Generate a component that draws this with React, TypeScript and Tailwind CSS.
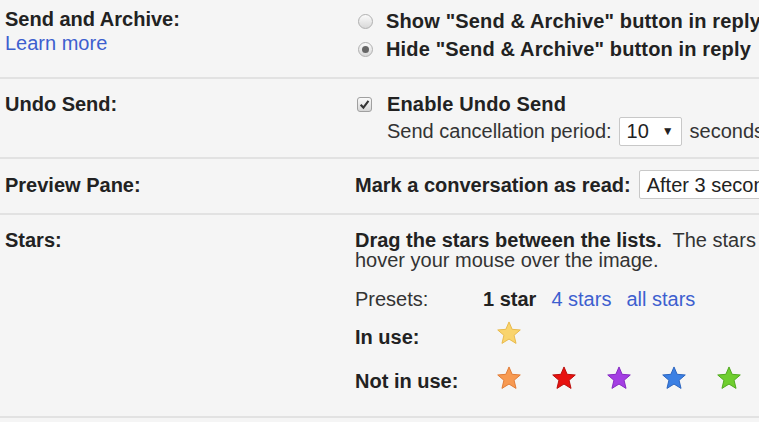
const font = "font-['Liberation_Sans',Arial,sans-serif]";

function Radio({ checked }: { checked?: boolean }) {
  return (
    <span className="ml-[3px] mr-[13px] flex h-[15px] w-[15px] shrink-0 items-center justify-center rounded-full border border-[#b0b0b0] bg-gradient-to-b from-[#fbfbfb] to-[#d8d8d8]">
      {checked && <span className="h-[7px] w-[7px] rounded-full bg-[#666]" />}
    </span>
  );
}

function Checkbox() {
  return (
    <span className="ml-[2px] mr-[15px] flex h-[15px] w-[15px] shrink-0 items-center justify-center rounded-[3px] border border-[#a0a0a0] bg-gradient-to-b from-[#fafafa] to-[#d6d6d6]">
      <svg width="11" height="11" viewBox="0 0 10 10">
        <path d="M1.5 5.2 L4 7.8 L8.6 1.8" fill="none" stroke="#333" strokeWidth="1.9" />
      </svg>
    </span>
  );
}

function Star({ color, edge }: { color: string; edge: string }) {
  return (
    <svg width="26" height="26" viewBox="0 0 24 24" className="shrink-0">
      <polygon
        points="12,1.8 14.9,8.6 22.4,9.2 16.7,14.1 18.5,21.6 12,17.6 5.5,21.6 7.3,14.1 1.6,9.2 9.1,8.6"
        fill={color}
        stroke={edge}
        strokeWidth="0.9"
        strokeLinejoin="round"
      />
    </svg>
  );
}

const others = [
  { color: "#f79a52", edge: "#e07a35" },
  { color: "#e8110f", edge: "#b80c0a" },
  { color: "#a43ee3", edge: "#8428c0" },
  { color: "#3b80e4", edge: "#2a63bd" },
  { color: "#6fce2f", edge: "#4fa81d" },
];

export default function App() {
  return (
    <div className={`${font} h-[422px] w-[759px] overflow-hidden bg-[#f5f5f5] text-[20px] text-[#222]`}>
      {/* send and archive */}
      <div className="flex border-b-2 border-[#e2e2e2] pb-[14px] pt-[7px]">
        <div className="w-[355px] shrink-0 pl-[5px] leading-[24px]">
          <div className="font-bold">Send and Archive:</div>
          <a className="text-[#3d5fcf]">Learn more</a>
        </div>
        <div className="whitespace-nowrap font-bold leading-[28px] tracking-[0.15px]">
          <div className="flex items-center">
            <Radio />
            Show "Send &amp; Archive" button in reply
          </div>
          <div className="flex items-center">
            <Radio checked />
            Hide "Send &amp; Archive" button in reply
          </div>
        </div>
      </div>

      {/* undo send */}
      <div className="flex border-b-2 border-[#e2e2e2] pb-[11px] pt-[13px]">
        <div className="w-[355px] shrink-0 pl-[5px] font-bold leading-[24px]">Undo Send:</div>
        <div className="whitespace-nowrap leading-[24px]">
          <div className="flex items-center font-bold tracking-[0.15px]">
            <Checkbox />
            Enable Undo Send
          </div>
          <div className="flex h-[30px] items-center pl-[32px] text-[#333]">
            Send cancellation period:
            <span className="ml-[7px] flex h-[29px] w-[63px] items-center rounded-[2px] border border-[#c8c8c8] bg-white pl-[7px] text-[#222]">
              10
              <span className="ml-[13px] text-[12px]">▼</span>
            </span>
            <span className="ml-[8px]">seconds</span>
          </div>
        </div>
      </div>

      {/* preview pane */}
      <div className="flex border-b-2 border-[#e2e2e2] pb-[14px] pt-[11px]">
        <div className="flex w-[355px] shrink-0 items-center pl-[5px] font-bold leading-[24px]">Preview Pane:</div>
        <div className="flex items-center whitespace-nowrap leading-[24px]">
          <span className="font-bold">Mark a conversation as read:</span>
          <span className="ml-[8px] flex h-[29px] w-[200px] items-center rounded-[2px] border border-[#c8c8c8] bg-white pl-[7px]">
            After 3 seconds
          </span>
        </div>
      </div>

      {/* stars */}
      <div className="flex border-b-2 border-[#e2e2e2] pb-[23px] pt-[15px]">
        <div className="w-[355px] shrink-0 pl-[5px] font-bold leading-[20px]">Stars:</div>
        <div className="whitespace-nowrap">
          <div className="leading-[20px] text-[#333]">
            <div>
              <span className="font-bold text-[#222]">Drag the stars between the lists.</span>
              {"\u00a0 "}The stars will rotate in the order shown below when you click successively.
            </div>
            <div>hover your mouse over the image.</div>
          </div>

          <div className="mt-[17px] flex leading-[24px]">
            <span className="w-[128px] text-[#333]">Presets:</span>
            <div className="flex gap-[15px]">
              <span className="font-bold">1 star</span>
              <a className="text-[#3d5fcf]">4 stars</a>
              <a className="text-[#3d5fcf]">all stars</a>
            </div>
          </div>

          <div className="mt-[8px] flex leading-[24px]">
            <span className="w-[141px] pt-[6px] font-bold">In use:</span>
            <div className="mt-[1px]">
              <Star color="#f9d46d" edge="#e8b94a" />
            </div>
          </div>

          <div className="mt-[15px] flex leading-[24px]">
            <span className="w-[141px] pt-[5px] font-bold">Not in use:</span>
            <div className="mt-[1px] flex gap-[29px]">
              {others.map((s) => (
                <Star key={s.color} color={s.color} edge={s.edge} />
              ))}
            </div>
          </div>
        </div>
      </div>
    </div>
  );
}
